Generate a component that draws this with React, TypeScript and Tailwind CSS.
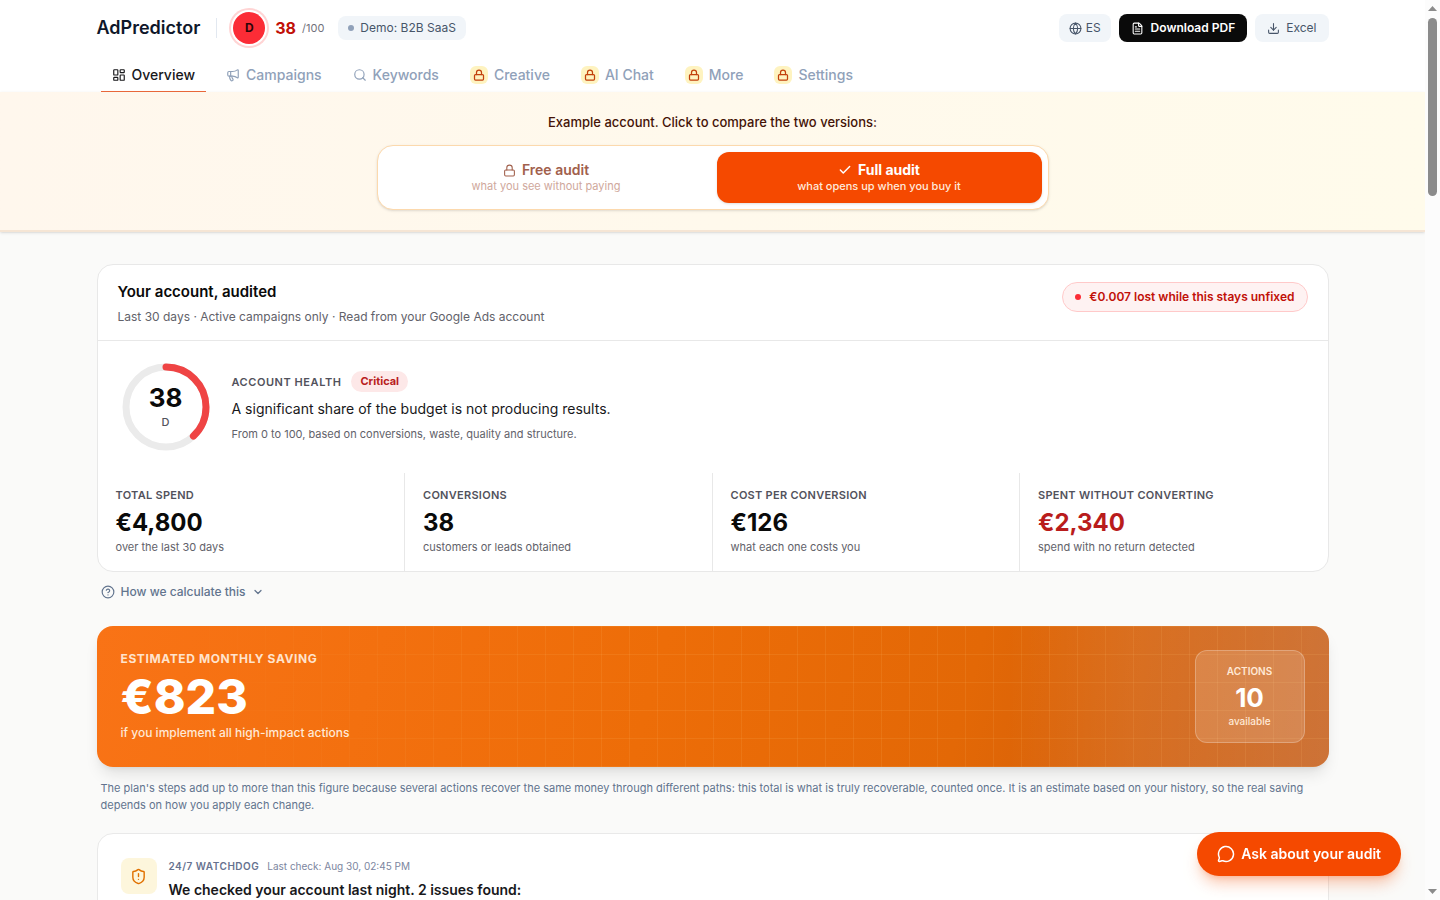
import type { ReactNode } from "react";
import {
  Check, ChevronDown, CircleQuestionMark, Download, FileText, Globe, LayoutDashboard,
  Lock, Megaphone, MessageCircle, Search, ShieldAlert,
} from "lucide-react";

const lockBadge = (
  <span className="flex size-[18px] items-center justify-center rounded-md bg-[#fef3c0]">
    <Lock className="size-3 text-[#c2410c]" strokeWidth={2.5} />
  </span>
);

const tabs: { label: string; icon: ReactNode; active?: boolean }[] = [
  { label: "Overview", icon: <LayoutDashboard className="size-[14px]" />, active: true },
  { label: "Campaigns", icon: <Megaphone className="size-[14px]" /> },
  { label: "Keywords", icon: <Search className="size-[14px]" /> },
  { label: "Creative", icon: lockBadge },
  { label: "AI Chat", icon: lockBadge },
  { label: "More", icon: lockBadge },
  { label: "Settings", icon: lockBadge },
];

const stats = [
  { label: "Total spend", value: "€4,800", note: "over the last 30 days" },
  { label: "Conversions", value: "38", note: "customers or leads obtained" },
  { label: "Cost per conversion", value: "€126", note: "what each one costs you" },
  { label: "Spent without converting", value: "€2,340", note: "spend with no return detected", alert: true },
];

function Header() {
  return (
    <header className="bg-white">
      <div className="mx-auto max-w-7xl px-6">
        <div className="flex h-14 items-center justify-between">
          <div className="flex items-center">
            <span className="text-lg font-semibold text-[#0f172a]">AdPredictor</span>
            <span className="ml-4 h-5 w-px bg-[#e2e8f0]" />
            <span className="ml-4 flex size-8 items-center justify-center rounded-full bg-[#fb2c36] text-xs font-bold text-[#2b0508] ring-2 ring-[#ffd4d4] ring-offset-2 ring-offset-white">D</span>
            <span className="ml-2.5 text-base font-bold text-[#c11007]">38</span>
            <span className="ml-1.5 text-[11px] text-[#71717b]">/100</span>
            <span className="ml-3.5 flex h-6 items-center gap-1.5 rounded-lg bg-[#f1f5f9] px-2.5 text-xs text-[#475569]">
              <span className="size-1.5 rounded-full bg-[#90a1b9]" />
              Demo: B2B SaaS
            </span>
          </div>
          <div className="flex items-center gap-2 text-xs">
            <button className="flex h-7 items-center gap-1 rounded-lg bg-[#f1f5f9] px-2.5 text-[#475569]">
              <Globe className="size-[13px]" />ES
            </button>
            <button className="flex h-7 items-center gap-[7px] rounded-lg bg-[#0a0a0a] px-3 font-semibold text-white">
              <FileText className="size-[13px]" />Download PDF
            </button>
            <button className="flex h-7 items-center gap-1.5 rounded-lg bg-[#f1f5f9] px-3 text-[#475569]">
              <Download className="size-[13px]" />Excel
            </button>
          </div>
        </div>
        <nav className="flex h-9 gap-[9px] px-1 text-sm font-medium">
          {tabs.map((t) => (
            <a
              key={t.label}
              href="#"
              className={
                t.active
                  ? "flex items-center gap-1.5 border-b border-[#e8673a] px-[11px] pt-0.5 text-[#18181b]"
                  : "flex items-center gap-1.5 border-b border-transparent px-[11px] pt-0.5 text-[#90a1b9]"
              }
            >
              {t.icon}
              {t.label}
            </a>
          ))}
        </nav>
      </div>
    </header>
  );
}

function CompareBanner() {
  return (
    <section className="border-b-2 border-[#f5e5d5] bg-linear-to-r from-[#fff7ed] to-[#fffbeb] px-4 pt-5 pb-5 shadow-sm">
      <p className="text-center text-[13px] leading-5 font-medium text-[#441306]">
        Example account. Click to compare the two versions:
      </p>
      <div className="mx-auto mt-[13px] grid max-w-2xl grid-cols-2 gap-2 rounded-2xl border border-[#fcd9ad] bg-white p-1.5 shadow-sm">
        <button className="flex flex-col items-center rounded-xl py-[9px]">
          <span className="flex items-center gap-1.5 text-sm leading-[18px] font-semibold text-[#a1604c]">
            <Lock className="size-[13px]" />Free audit
          </span>
          <span className="text-[11px] leading-[15px] text-[#cfa89c]">what you see without paying</span>
        </button>
        <button className="flex flex-col items-center rounded-xl bg-[#f54900] py-[9px] shadow-sm">
          <span className="flex items-center gap-1.5 text-sm leading-[18px] font-bold text-white">
            <Check className="size-[14px]" strokeWidth={2.5} />Full audit
          </span>
          <span className="text-[11px] leading-[15px] font-medium text-[#ffe9dc]">what opens up when you buy it</span>
        </button>
      </div>
    </section>
  );
}

function ScoreRing() {
  return (
    <div className="grid size-[88px] shrink-0 place-items-center">
      <svg viewBox="0 0 88 88" className="col-start-1 row-start-1 size-full -rotate-90" fill="none" strokeWidth="7">
        <circle cx="44" cy="44" r="40" stroke="#ebebeb" />
        <circle cx="44" cy="44" r="40" stroke="#ef4444" strokeLinecap="round" pathLength="100" strokeDasharray="38 100" />
      </svg>
      <div className="col-start-1 row-start-1 flex flex-col items-center">
        <span className="text-[26px] leading-7 font-bold text-[#0a0a0a]">38</span>
        <span className="mt-0.5 text-[11px] leading-4 font-medium text-[#52525c]">D</span>
      </div>
    </div>
  );
}

function AuditCard() {
  return (
    <section className="overflow-hidden rounded-2xl border border-[#e8e8e8] bg-white">
      <div className="flex items-start justify-between border-b border-[#e8e8e8] px-5 py-[15px]">
        <div>
          <h1 className="text-[15px] leading-6 font-semibold text-[#0a0a0a]">Your account, audited</h1>
          <p className="mt-1 text-xs leading-[17px] text-[#62626a]">
            Last 30 days · Active campaigns only · Read from your Google Ads account
          </p>
        </div>
        <span className="mt-0.5 flex h-[30px] items-center gap-2 rounded-full border border-[#ffc9c9] bg-[#fef2f2] px-3 text-xs font-semibold text-[#c11007]">
          <span className="size-1.5 rounded-full bg-[#fb2c36]" />
          €0.007 lost while this stays unfixed
        </span>
      </div>
      <div className="flex items-center gap-[22px] px-6 py-[22px]">
        <ScoreRing />
        <div>
          <div className="flex items-center gap-2.5">
            <span className="text-[11px] leading-5 font-semibold tracking-wider text-[#52525c] uppercase">Account health</span>
            <span className="rounded-full bg-[#fde8e8] px-[9px] text-[11px] leading-[21px] font-bold text-[#b91c1c]">Critical</span>
          </div>
          <p className="mt-[7px] text-sm leading-5 text-[#18181b]">A significant share of the budget is not producing results.</p>
          <p className="mt-[7px] text-[11px] leading-[17px] text-[#62626a]">From 0 to 100, based on conversions, waste, quality and structure.</p>
        </div>
      </div>
      <dl className="grid grid-cols-4 divide-x divide-[#e8e8e8]">
        {stats.map((s) => (
          <div key={s.label} className="px-[18px] pt-3.5 pb-4">
            <dt className="text-[11px] leading-4 font-semibold tracking-wide text-[#52525c] uppercase">{s.label}</dt>
            <dd className={s.alert ? "mt-1 text-2xl leading-8 font-bold text-[#b91c1c]" : "mt-1 text-2xl leading-8 font-bold text-[#0a0a0a]"}>{s.value}</dd>
            <dd className="text-[11px] leading-4 text-[#62626a]">{s.note}</dd>
          </div>
        ))}
      </dl>
    </section>
  );
}

function SavingCard() {
  return (
    <section className="relative overflow-hidden rounded-2xl bg-[linear-gradient(105deg,#f97316_0%,#ed6d08_45%,#e36806_70%,#c2560f_100%)] shadow-lg shadow-black/10">
      <div className="absolute inset-0 bg-[linear-gradient(90deg,transparent_74%,rgba(255,255,255,0.09)_84%,rgba(255,255,255,0.17)_100%)]" />
      <div className="absolute inset-0 bg-[linear-gradient(rgba(255,200,120,0.12)_1px,transparent_1px),linear-gradient(90deg,rgba(255,200,120,0.12)_1px,transparent_1px)] mask-[linear-gradient(90deg,transparent_5%,black_40%)] bg-size-[28px_28px]" />
      <div className="relative flex items-start justify-between p-6">
        <div>
          <h2 className="text-xs leading-[17px] font-bold tracking-wider text-[#ffe3cc] uppercase">Estimated monthly saving</h2>
          <p className="mt-[5px] text-5xl leading-[50px] font-extrabold text-white">€823</p>
          <p className="mt-[3px] text-xs leading-4 font-medium text-[#ffe9d6]">if you implement all high-impact actions</p>
        </div>
        <div className="flex w-[110px] flex-col items-center rounded-xl border border-white/25 bg-white/15 pt-3 pb-[13px] text-[#ffe9d6]">
          <span className="text-[10px] leading-4 font-semibold uppercase">Actions</span>
          <span className="mt-[5px] text-[26px] leading-7 font-bold text-white">10</span>
          <span className="mt-px text-[10px] leading-4 font-medium">available</span>
        </div>
      </div>
    </section>
  );
}

function WatchdogCard() {
  return (
    <section className="rounded-2xl border border-[#e9e9e9] bg-white px-[23px] pt-6 pb-14">
      <div className="flex gap-3">
        <span className="flex size-9 items-center justify-center rounded-lg bg-[#fdf6dc]">
          <ShieldAlert className="size-[17px] text-[#e17100]" />
        </span>
        <div>
          <p className="flex items-center gap-2 text-[10px] leading-4 text-[#7c86a0]">
            <span className="font-semibold tracking-wider text-[#66728f]">24/7 WATCHDOG</span>
            Last check: Aug 30, 02:45 PM
          </p>
          <h2 className="mt-1.5 text-sm leading-5 font-semibold text-[#18181b]">We checked your account last night. 2 issues found:</h2>
        </div>
      </div>
    </section>
  );
}

function ScrollRail() {
  return (
    <div aria-hidden="true" className="flex w-[15px] shrink-0 flex-col items-center bg-[#fcfcfc] py-1.5">
      <svg viewBox="0 0 9 5" className="h-[5px] w-[9px]" fill="#8b8b8b"><path d="M4.5 0 9 5H0z" /></svg>
      <div className="mt-[7px] h-[178px] w-[9px] rounded-full bg-[#8b8b8b]" />
      <svg viewBox="0 0 9 5" className="mt-auto h-[5px] w-[9px]" fill="#8b8b8b"><path d="M0 0h9L4.5 5z" /></svg>
    </div>
  );
}

export default function App() {
  return (
    <div className="flex h-screen overflow-hidden bg-[#fafaf9] font-['Inter',sans-serif]">
      <div className="min-w-0 flex-1 overflow-hidden">
        <Header />
        <CompareBanner />
        <main className="mx-auto max-w-7xl px-6 pt-8">
          <AuditCard />
          <button className="mt-3 flex items-center gap-1.5 px-1 text-xs leading-4 font-medium text-[#62748e]">
            <CircleQuestionMark className="size-[14px]" />
            How we calculate this
            <ChevronDown className="size-3" strokeWidth={2.5} />
          </button>
          <div className="mt-[26px]">
            <SavingCard />
          </div>
          <p className="mt-[13px] mb-[19px] px-1 text-[11px] leading-[17px] text-[#62748e]">
            The plan's steps add up to more than this figure because several actions recover the same money through different paths: this total is what is truly recoverable, counted once. It is an estimate based on your history, so the real saving depends on how you apply each change.
          </p>
          <WatchdogCard />
        </main>
      </div>
      <ScrollRail />
      <button className="fixed right-[39px] bottom-6 flex h-11 items-center gap-1.5 rounded-full bg-[#f54900] px-5 text-sm font-semibold text-white shadow-lg shadow-[#f54900]/30">
        <MessageCircle className="size-[18px]" />
        Ask about your audit
      </button>
    </div>
  );
}
